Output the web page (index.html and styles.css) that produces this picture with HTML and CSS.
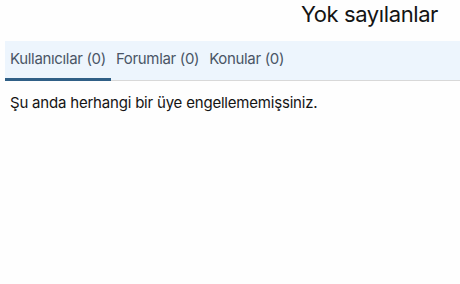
FILE: index.html
```html
<!DOCTYPE html>
<html>
<head>
<meta charset="utf-8">
<link rel="stylesheet" href="styles.css">
</head>
<body>
<div class="page">
  <div class="title-row"><h1 class="title">Yok sayılanlar</h1></div>
  <div class="tabs">
    <a class="tab active">Kullanıcılar (0)</a>
    <a class="tab">Forumlar (0)</a>
    <a class="tab">Konular (0)</a>
  </div>
  <div class="body">Şu anda herhangi bir üye engellememişsiniz.</div>
</div>
</body>
</html>
```
FILE: styles.css
```css
html, body { margin: 0; padding: 0; background: #fefefe; }
body { font-family: Inter, "Noto Sans", sans-serif; color: #141414; letter-spacing: -0.2px; }
.page { padding: 0 0 0 5px; }
.title-row { display: flex; justify-content: flex-end; padding: 0 22px 0 0; margin-bottom: 13px; }
.title { margin: 0; font-size: 22px; font-weight: 400; line-height: 28px; color: #141414; letter-spacing: -0.4px; }
.tabs { display: flex; background: #edf5fd; border-bottom: 1px solid #d8d8d8; height: 40px; box-sizing: border-box; }
.tab { display: block; padding: 8px 5px 0; height: 40px; box-sizing: border-box; font-size: 15px; line-height: 20px; color: #4a5566; letter-spacing: -0.33px; border-bottom: 3px solid transparent; }
.active { border-bottom-color: #2f5f86; }
.body { padding: 12px 5px; font-size: 15px; line-height: 20px; }
```
